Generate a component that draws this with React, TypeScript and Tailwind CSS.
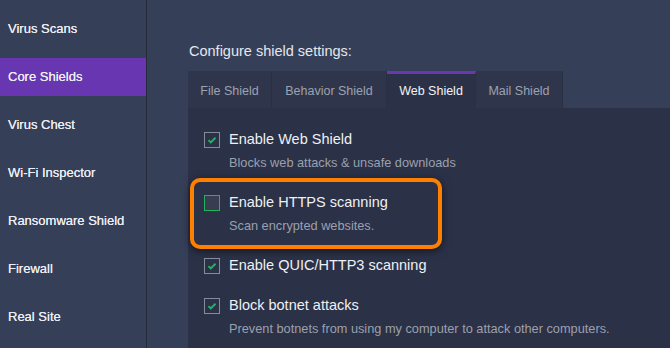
import React from "react";

const nav = ["Virus Scans", "Core Shields", "Virus Chest", "Wi-Fi Inspector", "Ransomware Shield", "Firewall", "Real Site"];

const tabs = [
    { label: "File Shield", w: "w-[84px]" },
    { label: "Behavior Shield", w: "w-[115px]" },
    { label: "Web Shield", w: "w-[89px]", active: true },
    { label: "Mail Shield", w: "w-[87px]" },
];

function Check({ on, green }: { on?: boolean; green?: boolean }) {
    return (
        <div
            className={
                "flex size-4 shrink-0 items-center justify-center border " +
                (green ? "border-[#1fb55c] bg-[#383d51]" : "border-[#868b99] bg-[#2b3147]")
            }
        >
            {on && (
                <svg viewBox="0 0 16 16" className="size-4">
                    <path d="M4 8.2l2.6 2.6L12 5.4" fill="none" stroke="#22b55f" strokeWidth="2.2" />
                </svg>
            )}
        </div>
    );
}

function Item({ label, sub, on, green, children }: { label: string; sub?: string; on?: boolean; green?: boolean; children?: React.ReactNode }) {
    return (
        <div className="relative flex flex-col">
            {children}
            <div className="flex h-[20px] items-center gap-[9px]">
                <Check on={on} green={green} />
                <span className="text-[14.5px] text-[#eef0f4]">{label}</span>
            </div>
            {sub && <div className="mt-[3px] flex h-[20px] items-center pl-[25px] text-[12.75px] text-[#9ba0ad]">{sub}</div>}
        </div>
    );
}

export default function App() {
    return (
        <div className="flex h-[348px] w-[670px] overflow-hidden bg-[#363f58] font-['Liberation_Sans',Arial,sans-serif]">
            <aside className="flex w-[147px] shrink-0 flex-col border-r border-[#252b3b] pt-[5px]">
                {nav.map((n) => (
                    <div key={n} className="flex h-[48px] items-center">
                        <div
                            className={
                                "flex h-[38px] w-full items-center pl-2 text-[13px] text-[#eceef3] [text-shadow:0_0_0.4px_#eceef3] " +
                                (n === "Core Shields" ? "bg-[#6836b0]" : "")
                            }
                        >
                            {n}
                        </div>
                    </div>
                ))}
            </aside>

            <main className="flex flex-1 flex-col pl-[41px]">
                <h2 className="mt-[42px] flex h-[20px] items-center pl-px text-[14.5px] text-[#e4e7ee]">Configure shield settings:</h2>

                <div className="mt-[9px] flex h-[37px]">
                    {tabs.map((t) => (
                        <div
                            key={t.label}
                            className={
                                "flex items-center justify-center border-r border-[#283044] text-[12.5px] " +
                                t.w +
                                " " +
                                (t.active ? "border-t-[3px] border-t-[#6a36b3] bg-[#2b3147] pt-px text-[#f2f3f6]" : "bg-[#2f364c] pt-[3px] text-[#9da2b0]")
                            }
                        >
                            {t.label}
                        </div>
                    ))}
                </div>

                <div className="flex flex-1 flex-col gap-[20px] bg-[#2b3147] pl-[16px] pt-[22px]">
                    <Item label="Enable Web Shield" sub="Blocks web attacks & unsafe downloads" on />
                    <Item label="Enable HTTPS scanning" sub="Scan encrypted websites." green>
                        <div className="pointer-events-none absolute top-[-15px] bottom-[-13px] left-[-14px] w-[252px] rounded-[10px] border-[4px] border-[#ff7f00] shadow-[0_2px_8px_rgba(0,0,0,0.55)]" />
                    </Item>
                    <Item label="Enable QUIC/HTTP3 scanning" on />
                    <Item label="Block botnet attacks" sub="Prevent botnets from using my computer to attack other computers." on />
                </div>
            </main>
        </div>
    );
}
